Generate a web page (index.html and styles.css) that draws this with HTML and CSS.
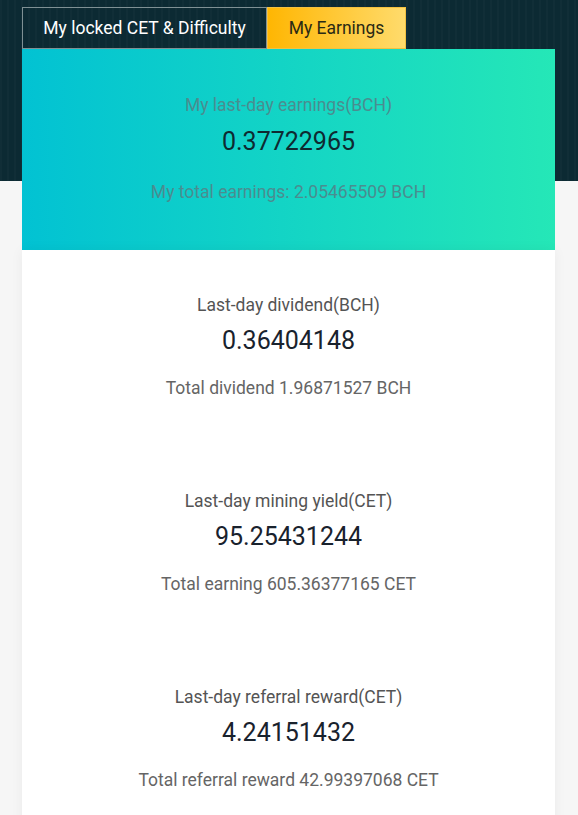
FILE: index.html
```html
<!DOCTYPE html>
<html lang="en">

<head>
    <title>My Earnings</title>
    <link rel="stylesheet" href="styles.css">
</head>

<body>
    <div class="page">
        <div class="tabs">
            <div class="tab">My locked CET &amp; Difficulty</div>
            <div class="tab active">My Earnings</div>
        </div>
        <div class="summary">
            <p class="label">My last-day earnings(BCH)</p>
            <p class="value">0.37722965</p>
            <p class="total">My total earnings: 2.05465509 BCH</p>
        </div>
        <div class="card">
            <div class="group">
                <p class="label">Last-day dividend(BCH)</p>
                <p class="value">0.36404148</p>
                <p class="total">Total dividend 1.96871527 BCH</p>
            </div>
            <div class="group">
                <p class="label">Last-day mining yield(CET)</p>
                <p class="value">95.25431244</p>
                <p class="total">Total earning 605.36377165 CET</p>
            </div>
            <div class="group">
                <p class="label">Last-day referral reward(CET)</p>
                <p class="value">4.24151432</p>
                <p class="total">Total referral reward 42.99397068 CET</p>
            </div>
        </div>
    </div>
</body>

</html>
```

FILE: styles.css
```css
body {
    margin: 0;
    font-family: Roboto, "Liberation Sans", Arial, sans-serif;
    background:
        repeating-linear-gradient(90deg, rgba(255, 255, 255, 0.018) 0 2px, transparent 2px 7px) top / 100% 181px no-repeat,
        linear-gradient(#0c2a33 0 181px, #f6f6f6 181px);
    min-height: 815px;
}

p {
    margin: 0;
}

.page {
    width: 533px;
    margin-left: 22px;
    padding-top: 7px;
}

.tabs {
    display: flex;
    height: 42px;
}

.tab {
    box-sizing: border-box;
    width: 245px;
    border: 1px solid #7f9094;
    color: #ffffff;
    font-size: 17.5px;
    line-height: 40px;
    text-align: center;
}

.tab.active {
    width: 139px;
    border-color: #f3c140;
    color: #2b2a14;
    background: linear-gradient(90deg, #ffb602, #ffdb6c);
}

.summary {
    height: 201px;
    box-sizing: border-box;
    padding-top: 44px;
    text-align: center;
    background: linear-gradient(90deg, #02c2d3, #25e7b7);
}

.summary .label,
.summary .total {
    color: #4a8d90;
}

.summary .value {
    margin-top: 10px;
    color: #0e2a31;
}

.summary .total {
    margin-top: 23px;
}

.card {
    background-color: #ffffff;
    box-shadow: 0 0 12px rgba(0, 0, 0, 0.05);
}

.group {
    height: 196px;
    box-sizing: border-box;
    padding-top: 43px;
    text-align: center;
}

.label,
.total {
    font-size: 17.5px;
    line-height: 24px;
}

.label {
    color: #545454;
}

.value {
    margin-top: 9px;
    font-size: 25px;
    line-height: 30px;
    color: #19222d;
}

.total {
    margin-top: 20px;
    color: #656565;
}
```
